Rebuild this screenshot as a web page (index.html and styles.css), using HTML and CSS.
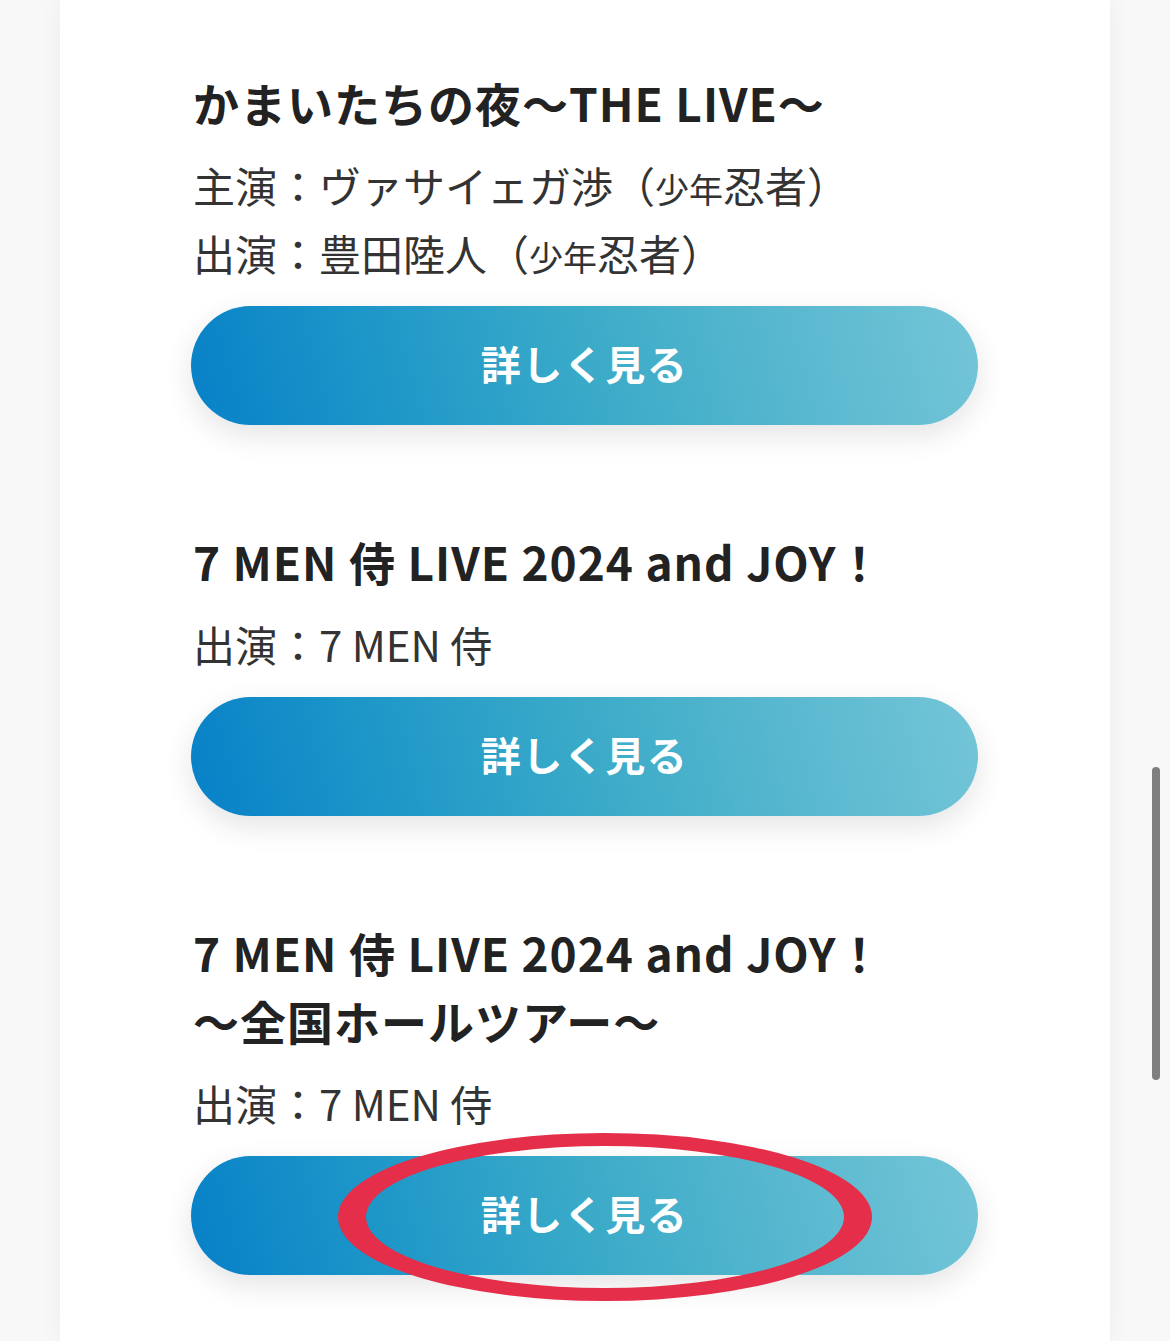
FILE: index.html
```html
<!DOCTYPE html>
<html lang="ja">
<head>
<meta charset="utf-8">
<title>公演一覧</title>
<link rel="stylesheet" href="styles.css">
</head>
<body>
<div class="page">
  <main class="card">
    <div class="list">
      <div class="item item-prev" aria-hidden="true">
        <div class="more-btn"></div>
      </div>

      <article class="item">
        <h2 class="title">かまいたちの夜〜THE LIVE〜</h2>
        <div class="cast">
          <p>主演：ヴァサイェガ渉（<span class="small">少年</span>忍者）</p>
          <p>出演：豊田陸人（<span class="small">少年</span>忍者）</p>
        </div>
        <a class="more-btn" href="#">詳しく見る</a>
      </article>

      <article class="item">
        <h2 class="title">7 MEN 侍 LIVE 2024 and JOY！</h2>
        <div class="cast">
          <p>出演：7 MEN 侍</p>
        </div>
        <a class="more-btn" href="#">詳しく見る</a>
      </article>

      <article class="item">
        <h2 class="title">7 MEN 侍 LIVE 2024 and JOY！<br>〜全国ホールツアー〜</h2>
        <div class="cast">
          <p>出演：7 MEN 侍</p>
        </div>
        <a class="more-btn" href="#">詳しく見る
          <svg class="mark" viewBox="0 0 536 170" aria-hidden="true">
            <path fill="#e52e49" fill-rule="evenodd" d="M1 85a267 84 0 1 0 534 0a267 84 0 1 0 -534 0Z M29 85a239 71 0 1 0 478 0a239 71 0 1 0 -478 0Z"/>
          </svg>
        </a>
      </article>
    </div>
  </main>
</div>
<div class="scroll-thumb"></div>
</body>
</html>
```

FILE: styles.css
```css
html, body {
  margin: 0;
  padding: 0;
}

body {
  background: #f8f8f8;
  font-family: "Noto Sans CJK JP", "Noto Sans", sans-serif;
  color: #222;
  overflow: hidden;
  height: 1341px;
}

.page {
  padding: 0 60px;
}

.card {
  display: flow-root;
  background: #ffffff;
  box-shadow: 0 0 22px rgba(0, 0, 0, 0.05);
  padding: 0 132px 60px 131px;
  min-height: 1341px;
  box-sizing: border-box;
}

.list {
  display: flex;
  flex-direction: column;
  gap: 102px;
  margin-top: -153px;
}

.item {
  display: flex;
  flex-direction: column;
}

.title {
  margin: 0 0 15px 2px;
  font-size: 46px;
  line-height: 68px;
  font-weight: 700;
  letter-spacing: 1px;
  color: #222;
}

.cast {
  margin: 0 0 19px 2px;
}

.cast p {
  margin: 0;
  font-size: 42px;
  line-height: 68px;
  font-weight: 400;
  color: #333;
}

.cast .small {
  font-size: 34px;
  line-height: 0;
}

.more-btn {
  position: relative;
  display: flex;
  align-items: center;
  justify-content: center;
  height: 119px;
  padding-bottom: 5px;
  box-sizing: border-box;
  border-radius: 60px;
  background: linear-gradient(75deg, #0780c8 0%, #1e97c8 25%, #3aaac8 50%, #58b8cf 75%, #74c5d7 100%);
  box-shadow: 0 10px 30px rgba(0, 0, 0, 0.11);
  color: #ffffff;
  text-decoration: none;
  font-size: 40px;
  font-weight: 700;
  letter-spacing: 1.5px;
}

.mark {
  position: absolute;
  left: 146px;
  top: -24px;
  width: 536px;
  height: 170px;
}

.scroll-thumb {
  position: fixed;
  right: 10px;
  top: 767px;
  width: 8px;
  height: 313px;
  border-radius: 4px;
  background: #7f7f7f;
}
```
